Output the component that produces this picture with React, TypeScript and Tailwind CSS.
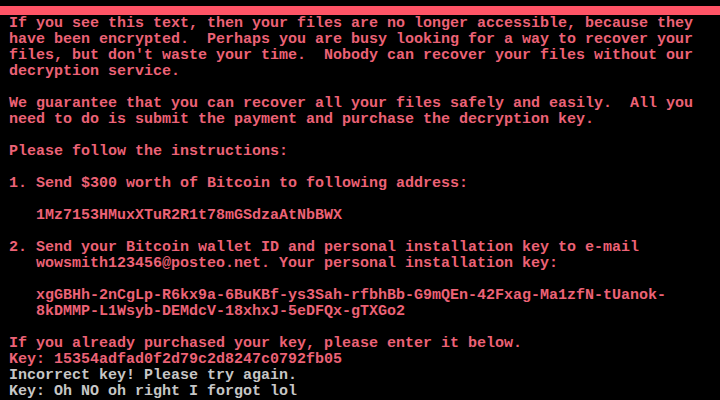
import React from 'react';

type Line = { text: string; tone?: 'red' | 'gray' };

const LINES: Line[] = [
  { text: "If you see this text, then your files are no longer accessible, because they" },
  { text: "have been encrypted.  Perhaps you are busy looking for a way to recover your" },
  { text: "files, but don't waste your time.  Nobody can recover your files without our" },
  { text: 'decryption service.' },
  { text: '' },
  { text: 'We guarantee that you can recover all your files safely and easily.  All you' },
  { text: 'need to do is submit the payment and purchase the decryption key.' },
  { text: '' },
  { text: 'Please follow the instructions:' },
  { text: '' },
  { text: '1. Send $300 worth of Bitcoin to following address:' },
  { text: '' },
  { text: '   1Mz7153HMuxXTuR2R1t78mGSdzaAtNbBWX' },
  { text: '' },
  { text: '2. Send your Bitcoin wallet ID and personal installation key to e-mail' },
  { text: '   wowsmith123456@posteo.net. Your personal installation key:' },
  { text: '' },
  { text: '   xgGBHh-2nCgLp-R6kx9a-6BuKBf-ys3Sah-rfbhBb-G9mQEn-42Fxag-Ma1zfN-tUanok-' },
  { text: '   8kDMMP-L1Wsyb-DEMdcV-18xhxJ-5eDFQx-gTXGo2' },
  { text: '' },
  { text: 'If you already purchased your key, please enter it below.' },
  { text: 'Key: 15354adfad0f2d79c2d8247c0792fb05' },
  { text: 'Incorrect key! Please try again.', tone: 'gray' },
  { text: 'Key: Oh NO oh right I forgot lol', tone: 'gray' },
];

export default function App() {
  return (
    <div className="w-[720px] h-[400px] bg-black overflow-hidden font-['Liberation_Mono',monospace] text-[15px] leading-4">
      <div className="h-4 flex items-start pt-[6px]">
        <div className="w-full h-[9px] bg-[#ff5466]" />
      </div>
      <div className="flex flex-col pl-[9px]">
        {LINES.map((line, i) => (
          <div
            key={i}
            className={
              line.tone === 'gray'
                ? 'h-4 whitespace-pre font-bold text-[#c6c6c6]'
                : 'h-4 whitespace-pre font-bold text-[#ec6276]'
            }
          >
            {line.text}
          </div>
        ))}
      </div>
    </div>
  );
}
